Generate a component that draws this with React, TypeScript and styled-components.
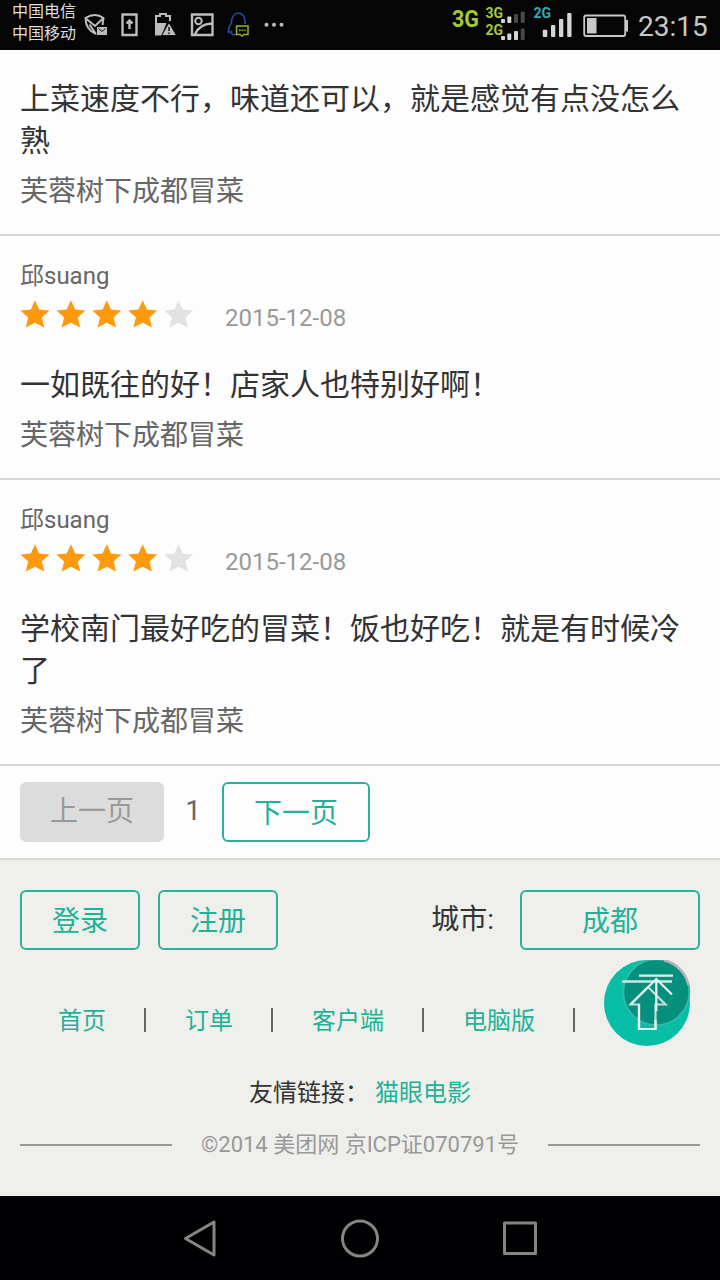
import React from 'react';
import styled, { createGlobalStyle } from 'styled-components';

const Global = createGlobalStyle`
  * { box-sizing: border-box; }
  body { margin: 0; background: #fdfdfd; font-family: Roboto, "Noto Sans CJK SC", sans-serif; color: #333; }
  a { color: #1fb299; text-decoration: none; }
`;

const Page = styled.div`width: 720px; height: 1280px; display: flex; flex-direction: column; overflow: hidden;`;

const StatusBar = styled.header`
  height: 50px; flex: none; background: #050505; display: flex; align-items: center; padding: 0 12px; color: #ddd;
`;
const Carriers = styled.div`font-size: 16px; line-height: 22px; width: 68px; padding-bottom: 4px; white-space: nowrap;`;
const StatusIcons = styled.svg`width: 210px; height: 50px; flex: none; display: block;`;
const Signal = styled.svg`width: 184px; height: 50px; flex: none; margin-left: auto; display: block;`;
const Clock = styled.time`font-size: 28px; line-height: 50px; width: 70px; margin-left: 6px; color: #c8c8c8; padding-top: 3px;`;

const ReviewItem = styled.article<{ $cut?: boolean }>`
  flex: none; border-bottom: 2px solid #d8d8d8; padding: ${p => (p.$cut ? 28 : 22)}px 20px 22px;
`;
const Author = styled.div`font-size: 24px; line-height: 36px; height: 36px; color: #666;`;
const Rating = styled.div`display: flex; align-items: center; height: 42px; margin-bottom: 28px;`;
const Stars = styled.svg`width: 180px; height: 30px; display: block;`;
const PostDate = styled.time`font-size: 24px; line-height: 42px; color: #999; margin-left: 25px; padding-top: 5px;`;
const Comment = styled.p`margin: 0; font-size: 30px; line-height: 42px; white-space: pre-line;`;
const Shop = styled.div`margin-top: 10px; font-size: 28px; line-height: 40px; height: 40px; color: #666;`;

const Pager = styled.nav`
  flex: none; height: 94px; border-bottom: 2px solid #d8d8d8; padding: 0 20px; display: flex; align-items: center;
`;
const PageNumber = styled.span`width: 58px; text-align: center; font-size: 28px; line-height: 56px; color: #666; padding-bottom: 2px;`;
const Button = styled.button<{ $w: number; $off?: boolean }>`
  width: ${p => p.$w}px; height: 60px; padding: ${p => (p.$off ? 0 : 3)}px 0 0; border-radius: 6px;
  font: inherit; font-size: 28px; line-height: ${p => (p.$off ? 56 : 53)}px;
  border: 2px solid ${p => (p.$off ? '#dcdcdc' : '#2bb09c')};
  background: ${p => (p.$off ? '#dcdcdc' : 'transparent')};
  color: ${p => (p.$off ? '#999' : '#1fb299')};
`;

const Footer = styled.footer`flex: none; height: 336px; background: #efefeb; padding: 30px 20px 0; position: relative;`;
const Account = styled.div`display: flex; gap: 18px; height: 60px;`;
const City = styled.div`margin-left: auto; display: flex; align-items: center; gap: 26px; font-size: 28px; line-height: 58px;`;
const Links = styled.nav`display: flex; align-items: center; height: 36px; margin-top: 52px; padding-left: 38px; font-size: 24px; line-height: 36px;`;
const LinkText = styled.a`padding-top: 2px;`;
const Divider = styled.i`width: 2px; height: 24px; background: #666; margin: 0 39px 0 38px;`;
const Friends = styled.div`margin-top: 37px; text-align: center; font-size: 24px; line-height: 36px; display: flex; justify-content: center; gap: 6px;`;
const Copyright = styled.div`
  display: flex; align-items: center; justify-content: space-between; margin-top: 16px; font-size: 22px; line-height: 36px; color: #999;
  &::before, &::after { content: ""; width: 152px; height: 2px; background: #999; }
`;
const ToTop = styled.svg`position: absolute; left: 604px; top: 100px; width: 88px; height: 86px; display: block;`;

const NavBar = styled.nav`flex: 1; background: #010103; display: flex; align-items: center; justify-content: center; gap: 120px; padding-top: 2px;`;
const NavIcon = styled.svg`width: 40px; height: 40px; display: block; fill: none; stroke: #858585; stroke-width: 3; stroke-linejoin: round;`;

const STAR = 'M15 0.3 L19.2 9.600 L29.500 10.500 L21.800 17.400 L24.300 27.400 L15 22.700 L5.700 27.400 L8.200 17.400 L0.500 10.500 L10.800 9.600 Z';

function Review({ author, date, text, cut }: { author?: string; date?: string; text: string; cut?: boolean }) {
  return (
    <ReviewItem $cut={cut}>
      {author && <Author>{author}</Author>}
      {date && (
        <Rating>
          <Stars viewBox="0 0 180 30">
            {[0, 1, 2, 3, 4].map(i => (
              <path key={i} d={STAR} transform={`translate(${i * 35.9} 0)`} fill={i < 4 ? '#ff9a0c' : '#e2e2e0'} />
            ))}
          </Stars>
          <PostDate>{date}</PostDate>
        </Rating>
      )}
      <Comment>{text}</Comment>
      <Shop>芙蓉树下成都冒菜</Shop>
    </ReviewItem>
  );
}

export default function App() {
  return (
    <Page>
      <Global />
      <StatusBar>
        <Carriers>中国电信<br />中国移动</Carriers>
        <StatusIcons viewBox="80 0 210 50" fill="none" stroke="#bdbdbd" strokeWidth="2">
          <path d="M96 34 C89 31 85.500 25 85.500 18 Q95 12 103.500 18 L102.500 25 M86.500 19 L95 26 L103 18.500 M89.500 24.500 L96 34" />
          <path d="M97 27h10v8h-10z" fill="#bdbdbd" stroke="none" />
          <path d="M98.500 28.500l3.500 3 3.500-3" stroke="#111" strokeWidth="1" />
          <path d="M122.500 14.500h14v20.500h-14zM129.500 29v-8M126.500 23.500l3-3 3 3" strokeWidth="2.400" />
          <path d="M156 24V16h4v-2h6v2h4v5" />
          <path d="M155 23h11.500l-5 12.500H155z" fill="#bdbdbd" stroke="none" />
          <path d="M169 22.500l7.500 13h-15z" fill="#bdbdbd" stroke="#111" strokeWidth="1" />
          <path d="M169 27v4M169 32.500v1.500" stroke="#111" strokeWidth="1.500" />
          <path d="M192 14.500h20.500v20.500h-20.500z" strokeWidth="2.400" /><circle cx="198.500" cy="21" r="3.200" />
          <path d="M195 34.500 Q199 24 212 23.500" strokeWidth="2.600" />
          <path d="M236 34.500 Q231 35.500 231.500 31.500 L228.500 32.500 Q228 28 231.500 23 C231 9.500 246.500 9.500 245 24" stroke="#25489c" strokeWidth="1.600" />
          <path d="M236.500 26h11.500v8.500h-4l-2 1.500-2-1.500h-3.500z" fill="#080808" stroke="#9fae25" strokeWidth="1.500" />
          <path d="M239 30.300h7" stroke="#9fae25" strokeWidth="1.500" strokeDasharray="1.600 1" />
          <g fill="#bdbdbd" stroke="none"><circle cx="266.500" cy="24.800" r="2" /><circle cx="274" cy="24.800" r="2" /><circle cx="281.500" cy="24.800" r="2" /></g>
        </StatusIcons>
        <Signal viewBox="448 0 184 50" fontFamily="Roboto" fontWeight="700">
          <text x="452" y="26.800" fontSize="24" fill="#a4c934" textLength="27" lengthAdjust="spacingAndGlyphs">3G</text>
          <text x="485.500" y="17.500" fontSize="14" fill="#a4c934" textLength="17.500">3G</text>
          <text x="485.500" y="35" fontSize="14" fill="#a4c934" textLength="17.500">2G</text>
          <text x="533.500" y="17.500" fontSize="14" fill="#35a9b5" textLength="17.500">2G</text>
          <g fill="#d5d5d5">
            <rect x="501" y="19" width="4" height="4" rx="1" /><rect x="507.300" y="16.500" width="4" height="6.500" rx="1" />
            <rect x="501" y="36" width="4" height="4" rx="1" /><rect x="507.300" y="33.500" width="4" height="6.500" rx="1" /><rect x="514" y="31" width="4" height="9" rx="1" />
            <rect x="542.800" y="29.800" width="4.500" height="7.200" rx="1" /><rect x="551" y="25" width="4.300" height="12" rx="1" />
            <rect x="559" y="19" width="4.300" height="18" rx="1" /><rect x="567.200" y="13" width="4.300" height="24" rx="1" />
          </g>
          <g fill="#484848">
            <rect x="514" y="14" width="4" height="9" rx="1" /><rect x="520.700" y="11.500" width="4" height="11.500" rx="1" /><rect x="520.700" y="28.500" width="4" height="11.500" rx="1" />
          </g>
          <rect x="584.200" y="15.500" width="41" height="20.500" rx="2" fill="none" stroke="#c8c8c8" strokeWidth="1.800" />
          <path d="M587 18h9.500v15.500H587zM625.500 20h2.500v11.500h-2.500z" fill="#c8c8c8" />
        </Signal>
        <Clock>23:15</Clock>
      </StatusBar>

      <Review cut text={'上菜速度不行，味道还可以，就是感觉有点没怎么\n熟'} />
      <Review author="邱suang" date="2015-12-08" text="一如既往的好！店家人也特别好啊！" />
      <Review author="邱suang" date="2015-12-08" text={'学校南门最好吃的冒菜！饭也好吃！就是有时候冷\n了'} />

      <Pager>
        <Button $w={144} $off>上一页</Button>
        <PageNumber>1</PageNumber>
        <Button $w={148}>下一页</Button>
      </Pager>

      <Footer>
        <Account>
          <Button $w={120}>登录</Button>
          <Button $w={120}>注册</Button>
          <City>城市:<Button $w={180}>成都</Button></City>
        </Account>
        <Links>
          <LinkText>首页</LinkText><Divider /><LinkText>订单</LinkText><Divider />
          <LinkText>客户端</LinkText><Divider /><LinkText>电脑版</LinkText><Divider />
        </Links>
        <Friends><span>友情链接：</span><a>猫眼电影</a></Friends>
        <Copyright>©2014 美团网 京ICP证070791号</Copyright>
        <ToTop viewBox="0 0 88 86">
          <circle cx="43" cy="43" r="43" fill="#06bda6" />
          <circle cx="52.300" cy="32.300" r="33" fill="#058f7d" stroke="#2fbba8" strokeWidth="2" />
          <path d="M60 0.300 A33 33 0 0 1 84.500 25" fill="none" stroke="#bcaeb6" strokeWidth="2.500" />
          <g fill="none" strokeWidth="2.200">
            <path d="M44 27l17.500 17.500H51.500V69H35V44.500H26.500z" stroke="#c3ddd8" />
            <path d="M35 44.500V69H51.500V60" stroke="#ecfaf7" />
            <path d="M18 21.500h50" stroke="#c9ebe5" strokeWidth="2.600" />
            <path d="M35 15.600h34M52.300 51V19M27 44l25.300-25L68 34.500" stroke="#e3f6f2" />
          </g>
        </ToTop>
      </Footer>

      <NavBar>
        <NavIcon viewBox="0 0 40 40"><path d="M5.500 19.500L34 3v33z" /></NavIcon>
        <NavIcon viewBox="0 0 40 40"><circle cx="20" cy="19.500" r="17.500" /></NavIcon>
        <NavIcon viewBox="0 0 40 40"><path d="M4.500 4h31v30.500h-31z" /></NavIcon>
      </NavBar>
    </Page>
  );
}
